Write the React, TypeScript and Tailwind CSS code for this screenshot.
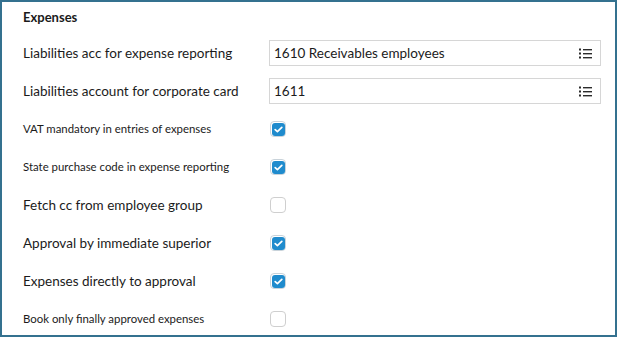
import React from "react";

const ListIcon = () => (
  <svg width="13" height="11" viewBox="0 0 13 11" className="text-[#2b2b2b]">
    <rect x="0" y="0.5" width="2" height="2" fill="currentColor" />
    <rect x="0" y="4.5" width="2" height="2" fill="currentColor" />
    <rect x="0" y="8.5" width="2" height="2" fill="currentColor" />
    <rect x="4" y="1" width="9" height="1.4" fill="currentColor" />
    <rect x="4" y="5" width="9" height="1.4" fill="currentColor" />
    <rect x="4" y="9" width="9" height="1.4" fill="currentColor" />
  </svg>
);

const Checkbox = ({ checked }: { checked: boolean }) =>
  checked ? (
    <span className="flex items-center justify-center w-[16px] h-[16px] rounded-[4px] border border-[#c9d3da] bg-white">
      <span className="flex items-center justify-center w-[13px] h-[13px] rounded-[3px] bg-[#1f8bcd]">
        <svg width="9" height="7" viewBox="0 0 9 7">
          <path d="M1.2 3.6 L3.4 5.6 L7.8 1.3" stroke="white" strokeWidth="1.7" fill="none" strokeLinecap="round" strokeLinejoin="round" />
        </svg>
      </span>
    </span>
  ) : (
    <span className="block w-[16px] h-[16px] rounded-[4px] border border-[#cfcfcf] bg-white" />
  );

type Row =
  | { label: string; small?: boolean; kind: "input"; value: string }
  | { label: string; small?: boolean; kind: "check"; checked: boolean };

const rows: Row[] = [
  { label: "Liabilities acc for expense reporting", kind: "input", value: "1610 Receivables employees" },
  { label: "Liabilities account for corporate card", kind: "input", value: "1611" },
  { label: "VAT mandatory in entries of expenses", small: true, kind: "check", checked: true },
  { label: "State purchase code in expense reporting", small: true, kind: "check", checked: true },
  { label: "Fetch cc from employee group", kind: "check", checked: false },
  { label: "Approval by immediate superior", kind: "check", checked: true },
  { label: "Expenses directly to approval", kind: "check", checked: true },
  { label: "Book only finally approved expenses", small: true, kind: "check", checked: false },
];

export default function App() {
  return (
    <div className="w-[618px] h-[338px] bg-white overflow-hidden font-['Lato','Open_Sans',sans-serif] text-[#1b1b1b]">
      <div className="w-[617px] h-[337px] border-2 border-[#34718f] overflow-hidden">
        <div className="h-[32px] pl-[21px] flex items-center text-[13px] font-bold">Expenses</div>
        <div className="pl-[21px] pr-[14px]">
          {rows.map((r) => (
            <div key={r.label} className="h-[38px] flex items-center">
              <div className={`w-[246px] ${r.small ? "text-[11.4px]" : "text-[13.5px]"}`}>{r.label}</div>
              {r.kind === "input" ? (
                <div className="flex-1 h-[26px] border border-[#d6d6d6] flex items-center justify-between pl-[4px] pr-[8px] text-[13.5px]">
                  <span>{r.value}</span>
                  <ListIcon />
                </div>
              ) : (
                <div className="pl-[1px]">
                  <Checkbox checked={r.checked} />
                </div>
              )}
            </div>
          ))}
        </div>
      </div>
    </div>
  );
}
